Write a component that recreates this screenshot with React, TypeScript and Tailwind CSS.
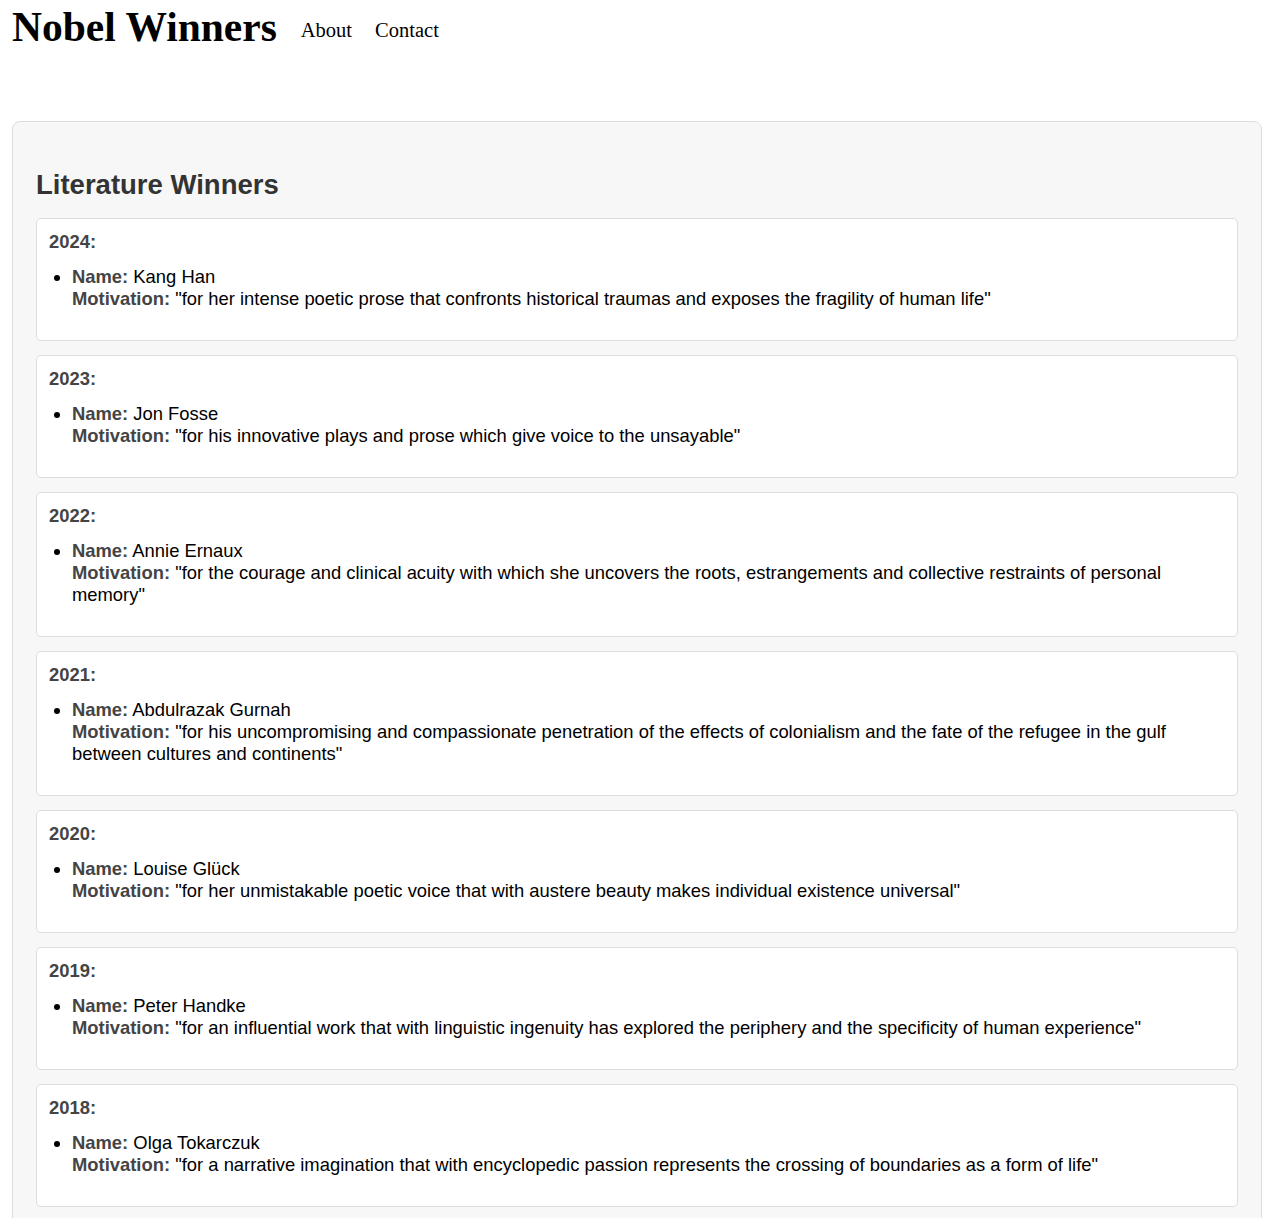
import React from "react";

type Winner = {
  year: number;
  name: string;
  motivation: string;
};

const winners: Winner[] = [
  {
    year: 2024,
    name: "Kang Han",
    motivation:
      "for her intense poetic prose that confronts historical traumas and exposes the fragility of human life",
  },
  {
    year: 2023,
    name: "Jon Fosse",
    motivation: "for his innovative plays and prose which give voice to the unsayable",
  },
  {
    year: 2022,
    name: "Annie Ernaux",
    motivation:
      "for the courage and clinical acuity with which she uncovers the roots, estrangements and collective restraints of personal memory",
  },
  {
    year: 2021,
    name: "Abdulrazak Gurnah",
    motivation:
      "for his uncompromising and compassionate penetration of the effects of colonialism and the fate of the refugee in the gulf between cultures and continents",
  },
  {
    year: 2020,
    name: "Louise Glück",
    motivation:
      "for her unmistakable poetic voice that with austere beauty makes individual existence universal",
  },
  {
    year: 2019,
    name: "Peter Handke",
    motivation:
      "for an influential work that with linguistic ingenuity has explored the periphery and the specificity of human experience",
  },
  {
    year: 2018,
    name: "Olga Tokarczuk",
    motivation:
      "for a narrative imagination that with encyclopedic passion represents the crossing of boundaries as a form of life",
  },
];

const App: React.FC = () => {
  return (
    <div className="min-h-screen bg-white text-black">
      {/* Header */}
      <header className="flex items-start gap-6 px-3 pt-1 font-['Liberation_Serif',serif]">
        <h1 className="text-[41.5px] font-bold leading-[47px]">Nobel Winners</h1>
        <nav className="flex gap-[23px] pt-[15px] text-[20.5px] leading-[23px]">
          <a href="#about">About</a>
          <a href="#contact">Contact</a>
        </nav>
      </header>

      {/* Winners panel */}
      <main className="ml-3 mr-4 mt-[70px] rounded-lg border border-[#dddddd] bg-[#f7f7f7] px-[23px] pt-[47px] pb-6 font-['Liberation_Sans',Arial,sans-serif] text-[18.4px]">
        <h2 className="mb-[18px] text-[27.5px] font-bold leading-[31px] text-[#333333]">
          Literature Winners
        </h2>

        <div className="flex flex-col gap-[14px]">
          {winners.map((w) => (
            <section
              key={w.year}
              className="rounded-[5px] border border-[#dddddd] bg-white px-3 pt-3 pb-3"
            >
              <div className="font-bold leading-[22px] text-[#444444]">{w.year}:</div>
              <ul className="mt-[13px] mb-[18px] list-disc pl-[23px] leading-[22px]">
                <li>
                  <strong className="text-[#444444]">Name:</strong> {w.name}
                  <br />
                  <strong className="text-[#444444]">Motivation:</strong> "{w.motivation}"
                </li>
              </ul>
            </section>
          ))}
        </div>
      </main>
    </div>
  );
};

export default App;
